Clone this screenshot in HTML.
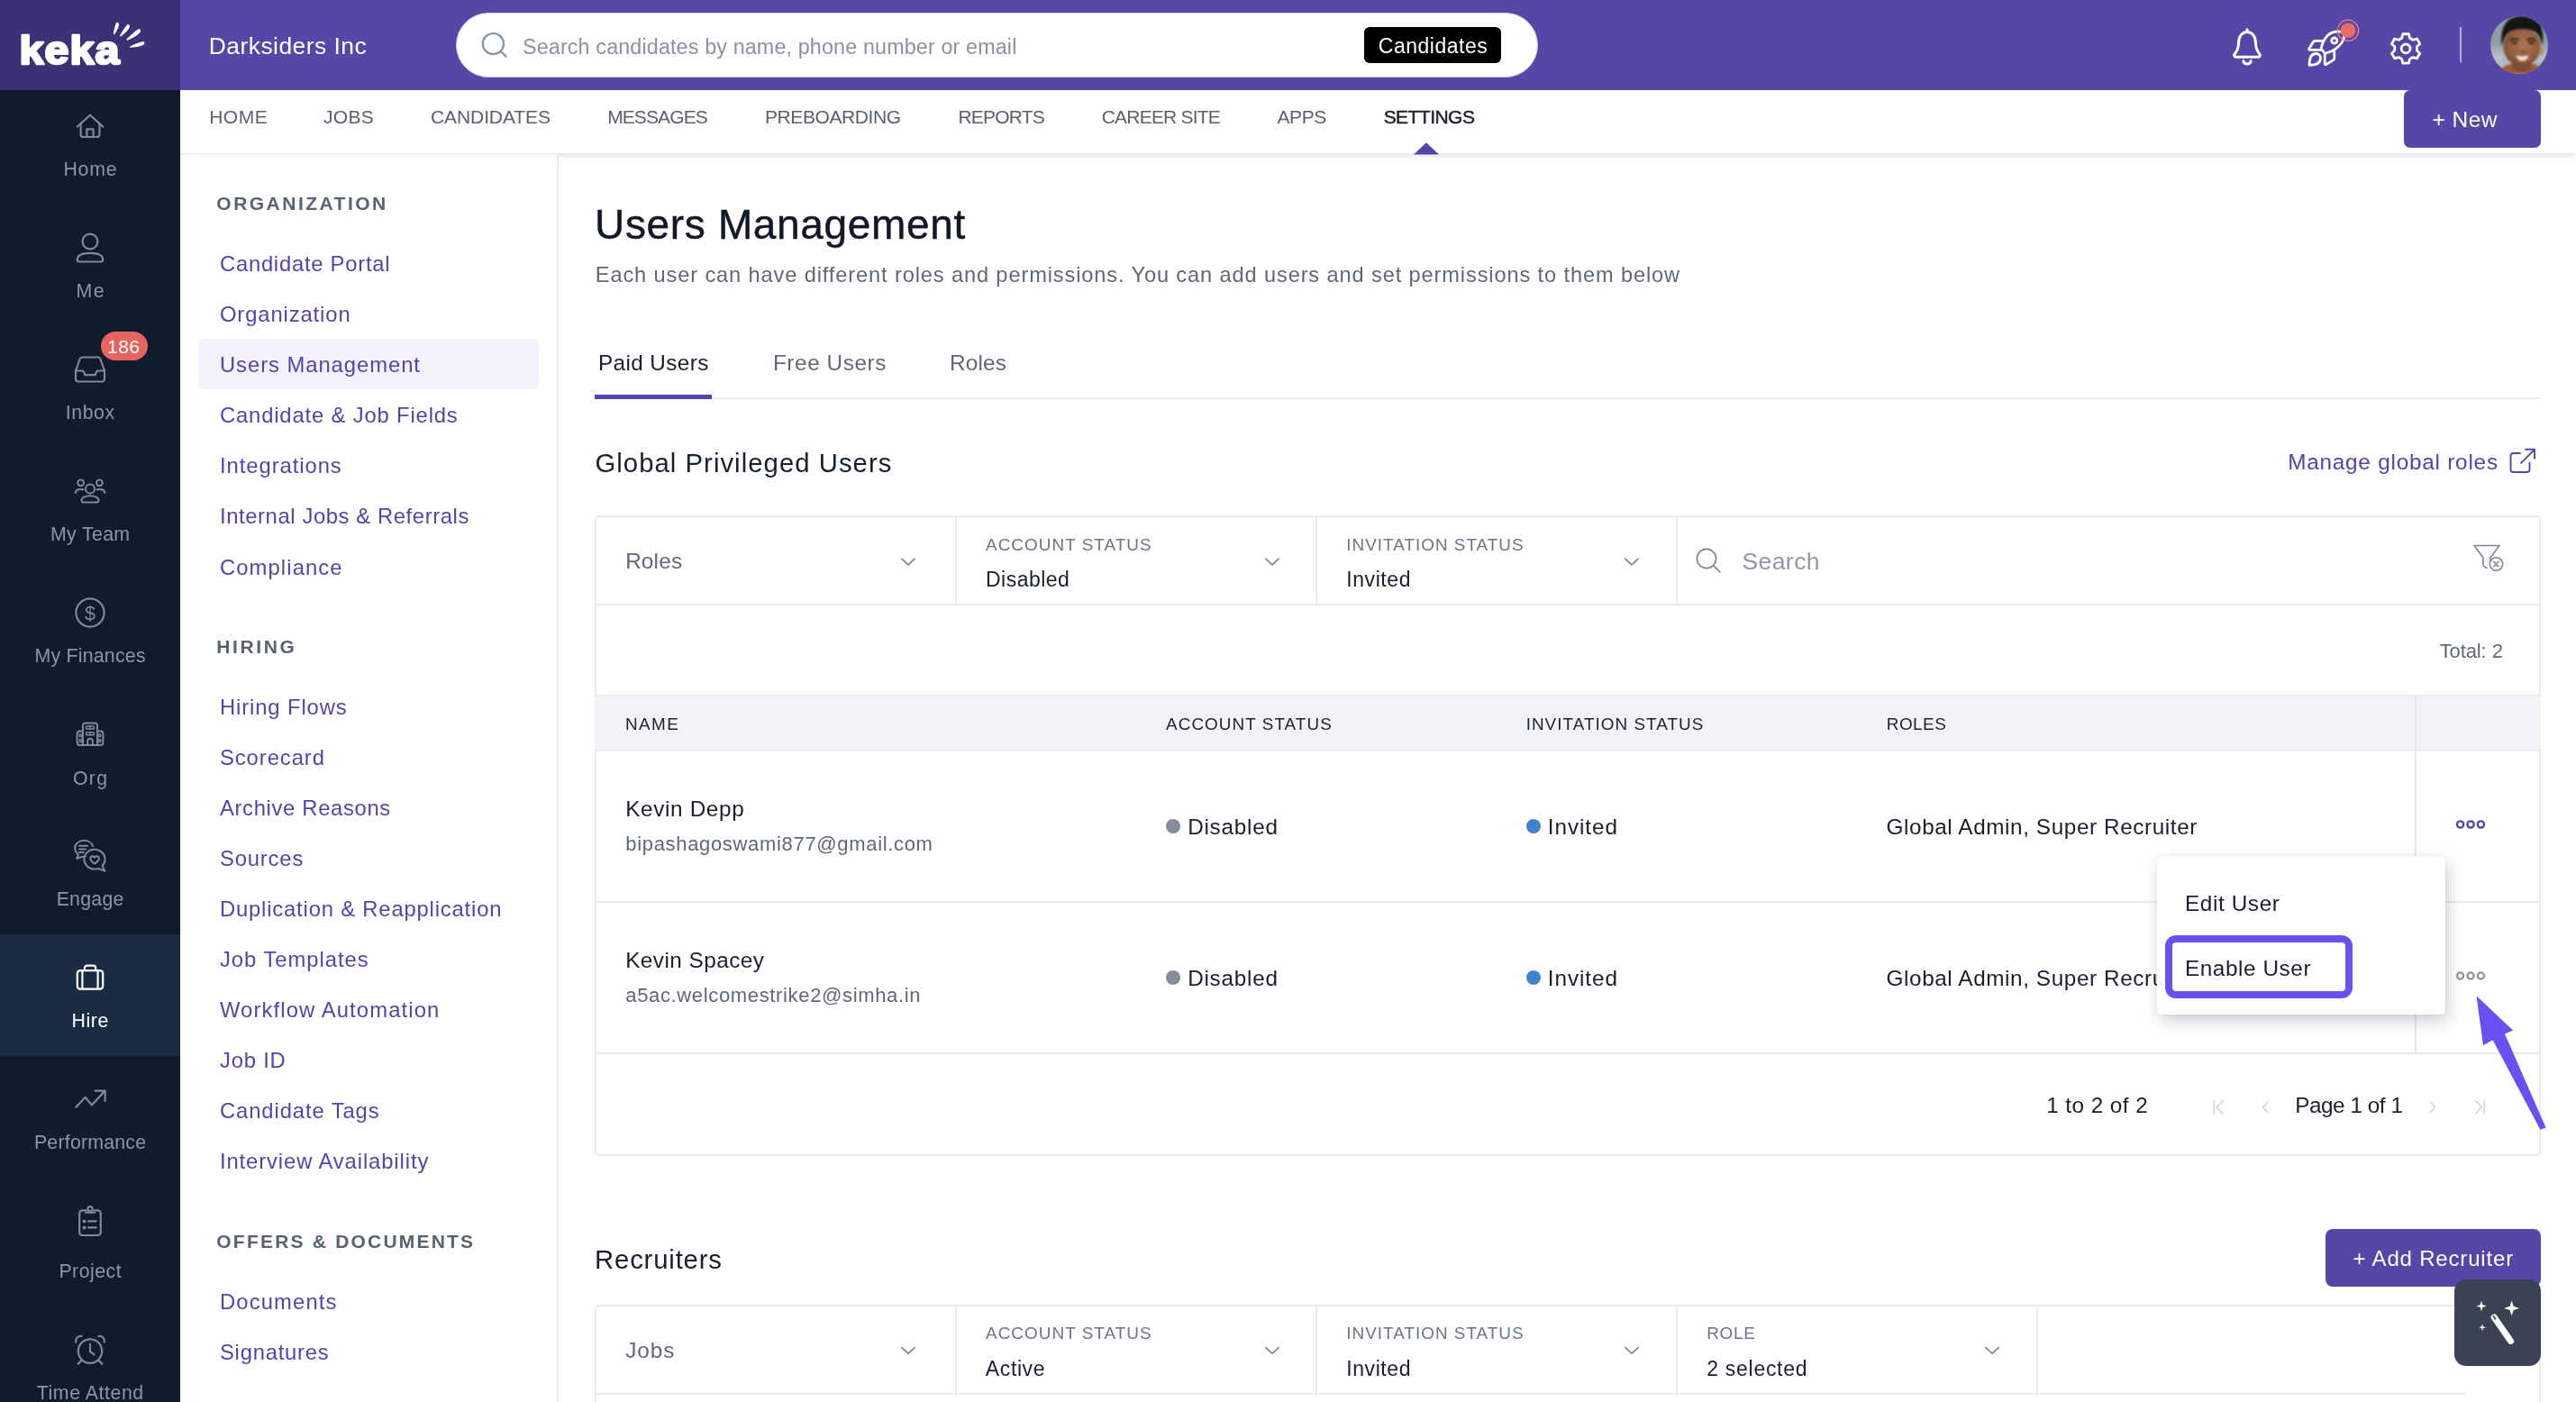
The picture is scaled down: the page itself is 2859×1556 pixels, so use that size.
<!DOCTYPE html>
<html lang="en"><head><meta charset="utf-8"><title>Users Management - Keka Hire</title>
<style>
html,body{margin:0;padding:0;background:#fff;}
body{width:2859px;height:1556px;overflow:hidden;font-family:"Liberation Sans",sans-serif;}
#root{will-change:transform;position:relative;width:2859px;height:1556px;overflow:hidden;background:#fff;}
.t{position:absolute;white-space:nowrap;font-kerning:normal;}
.b{position:absolute;box-sizing:border-box;}
svg{position:absolute;overflow:visible;}
.si{fill:none;stroke:#7f8997;stroke-width:2.2;stroke-linecap:round;stroke-linejoin:round;}
.hi{fill:none;stroke:#fff;stroke-width:3;stroke-linecap:round;stroke-linejoin:round;}
.chev{fill:none;stroke:#7a8595;stroke-width:1.7;stroke-linecap:round;stroke-linejoin:round;}
.pg{fill:none;stroke:#cbd0d8;stroke-width:1.400;stroke-linecap:round;stroke-linejoin:round;}
</style></head><body><div id="root">
<!-- ===== main content boxes ===== -->
<!-- tabs underline -->
<div class="b" style="left:660px;top:441px;width:2160px;height:2px;background:#ebedf0;"></div>
<div class="b" style="left:660px;top:438px;width:130px;height:4.5px;background:#5546a8;"></div>

<!-- card 1 -->
<div class="b" style="left:660px;top:772px;width:2160px;height:511px;border:2px solid #e9ebee;border-radius:0 0 5px 5px;background:#fff;"></div>
<div class="b" style="left:660px;top:572px;width:2160px;height:201px;border:2px solid #e9ebee;border-radius:5px;background:#fff;"></div>
<!-- filter row lines -->
<div class="b" style="left:661px;top:670px;width:2158px;height:2px;background:#e9ebee;"></div>
<div class="b" style="left:1060px;top:573px;width:2px;height:98px;background:#e9ebee;"></div>
<div class="b" style="left:1460px;top:573px;width:2px;height:98px;background:#e9ebee;"></div>
<div class="b" style="left:1860px;top:573px;width:2px;height:98px;background:#e9ebee;"></div>
<!-- table header -->
<div class="b" style="left:660px;top:771px;width:2160px;height:63px;background:#f2f3f6;border-top:2px solid #e9ebee;border-bottom:2px solid #eaecef;"></div>
<!-- action col separator -->
<div class="b" style="left:2680px;top:773px;width:2px;height:396px;background:#e6e8eb;"></div>
<!-- row separators -->
<div class="b" style="left:661px;top:1000px;width:2158px;height:2px;background:#e9ebee;"></div>
<div class="b" style="left:661px;top:1168px;width:2158px;height:2px;background:#e9ebee;"></div>

<!-- status dots -->
<div class="b" style="left:1294px;top:909px;width:16px;height:16px;border-radius:50%;background:#858d9c;"></div>
<div class="b" style="left:1694px;top:909px;width:16px;height:16px;border-radius:50%;background:#3f83cf;"></div>
<div class="b" style="left:1294px;top:1077px;width:16px;height:16px;border-radius:50%;background:#858d9c;"></div>
<div class="b" style="left:1694px;top:1077px;width:16px;height:16px;border-radius:50%;background:#3f83cf;"></div>

<!-- three dots -->
<svg style="left:0;top:0" width="2859" height="1556">
<g fill="none" stroke="#5546a8" stroke-width="2.4"><circle cx="2730.6" cy="915" r="3.6"/><circle cx="2742" cy="915" r="3.6"/><circle cx="2753.4" cy="915" r="3.6"/></g>
<g fill="none" stroke="#8a93a3" stroke-width="2.3"><circle cx="2730.6" cy="1083" r="3.6"/><circle cx="2742" cy="1083" r="3.6"/><circle cx="2753.4" cy="1083" r="3.6"/></g>
<!-- chevrons filter1 -->
<path class="chev" d="M1000.8 620.2l7.2 6.6 7.2-6.6"/>
<path class="chev" d="M1404.8 620.2l7.2 6.6 7.2-6.6"/>
<path class="chev" d="M1803.8 620.2l7.2 6.6 7.2-6.6"/>
<!-- search icon filter1 -->
<g fill="none" stroke="#7a8595" stroke-width="1.700" stroke-linecap="round"><circle cx="1894" cy="620" r="10.6"/><path d="M1901.8 627.8L1909 635"/></g>
<!-- filter clear icon -->
<g fill="none" stroke="#7a8595" stroke-width="1.600" stroke-linecap="round" stroke-linejoin="round"><path d="M2764 626.5v-7.5l10-13.5h-28l10 13.5v7.5c0 1.2 0.6 2 1.6 2.6l2.4 1.4"/><circle cx="2770.5" cy="626" r="7.2" fill="#fff"/><path d="M2767.8 623.3l5.4 5.4M2773.2 623.3l-5.4 5.4" stroke-width="1.500"/></g>
<!-- external link -->
<g fill="none" stroke="#5546a8" stroke-width="1.900" stroke-linecap="round" stroke-linejoin="round"><path d="M2797 503h-7.5a3 3 0 0 0-3 3v15a3 3 0 0 0 3 3h15a3 3 0 0 0 3-3v-7.5"/><path d="M2803 498.8h10v10M2812.5 499.3l-14.5 14.5"/></g>
<!-- pagination icons -->
<path class="pg" d="M2457.2 1221.5v14.5M2467 1221.5l-7 7.2 7 7.3"/>
<path class="pg" d="M2517 1223l-5.6 5.8 5.6 5.8"/>
<path class="pg" d="M2697.3 1223l5.6 5.8-5.6 5.8"/>
<path class="pg" d="M2757.2 1221.5v14.5M2747.4 1221.5l7 7.2-7 7.3"/>
</svg>

<!-- add recruiter button -->
<div class="b" style="left:2581px;top:1364px;width:239px;height:64px;background:#5546a8;border-radius:8px;"></div>

<!-- card 2 -->
<div class="b" style="left:660px;top:1448px;width:2160px;height:200px;border:2px solid #e9ebee;border-radius:5px;background:#fff;"></div>
<div class="b" style="left:661px;top:1546px;width:2076px;height:2px;background:#e9ebee;"></div>
<div class="b" style="left:1060px;top:1449px;width:2px;height:98px;background:#e9ebee;"></div>
<div class="b" style="left:1460px;top:1449px;width:2px;height:98px;background:#e9ebee;"></div>
<div class="b" style="left:1860px;top:1449px;width:2px;height:98px;background:#e9ebee;"></div>
<div class="b" style="left:2260px;top:1449px;width:2px;height:98px;background:#e9ebee;"></div>

<svg style="left:0;top:0" width="2859" height="1556">
<!-- chevrons filter2 -->
<path class="chev" d="M1000.8 1495.6l7.2 6.6 7.2-6.6"/>
<path class="chev" d="M1404.8 1495.6l7.2 6.6 7.2-6.6"/>
<path class="chev" d="M1803.8 1495.6l7.2 6.6 7.2-6.6"/>
<path class="chev" d="M2203.8 1495.6l7.2 6.6 7.2-6.6"/>
</svg>

<!-- ===== nav bar ===== -->
<div class="b" style="left:200px;top:100px;width:2659px;height:70px;background:#fff;box-shadow:0 2px 8px rgba(30,40,60,0.16);"></div>
<!-- settings triangle -->
<svg style="left:0;top:0" width="2859" height="180"><path d="M1569 171.500L1583 158.200l14 13.300z" fill="#5546a8"/></svg>
<!-- new button -->
<div class="b" style="left:2668px;top:100px;width:152px;height:64px;background:#5546a8;border-radius:0 0 8px 8px;border-radius:7px;"></div>

<!-- ===== settings side panel ===== -->
<div class="b" style="left:200px;top:170px;width:420px;height:1386px;background:#fff;border-right:2px solid #e9ebee;"></div>
<div class="b" style="left:200px;top:170px;width:418px;height:2px;background:#eceef1;"></div>
<div class="b" style="left:220px;top:376px;width:378px;height:56px;background:#f3f1fc;border-radius:6px;"></div>

<!-- ===== header ===== -->
<div class="b" style="left:200px;top:0;width:2659px;height:100px;background:#5546a8;"></div>
<div class="b" style="left:506px;top:14px;width:1201px;height:72px;background:#fff;border-radius:36px;border:1.500px solid #d3cfe8;"></div>
<div class="b" style="left:1514px;top:30px;width:152px;height:40px;background:#000;border-radius:6px;"></div>
<svg style="left:0;top:0" width="2859" height="100">
<g fill="none" stroke="#8492a6" stroke-width="2.2" stroke-linecap="round"><circle cx="547.4" cy="48.6" r="11.6"/><path d="M555.8 57l5.8 5.8"/></g>
<!-- bell -->
<g class="hi"><path d="M2494 32.8v2.6"/><path d="M2481.6 63.2c-1.8 0-2.6-1.9-1.5-3.2 2.6-3 4.4-6.200 4.400-12.200 0-7.200 4-12.400 9.500-12.400s9.500 5.200 9.500 12.400c0 6 1.800 9.200 4.400 12.200 1.100 1.300 0.300 3.200-1.500 3.200z"/><path d="M2489.800 67.600a4.300 4.300 0 0 0 8.400 0"/></g>
<!-- rocket -->
<g class="hi" style="stroke-width:2.8">
<path d="M2600.6 36.1C2597 34 2588.500 34.300 2583.500 39.200C2579.300 43.400 2577 49 2576 54.300L2580.400 59.100C2586 58.100 2591.500 55.300 2595.500 51.500C2600.200 47 2603 41 2600.600 36.100Z"/>
<circle cx="2590.800" cy="45.100" r="3.100"/>
<path d="M2577.600 45.300H2569.400c-0.900 0-1.600 0.400-2 1.200L2562.800 54c-0.400 0.700 0.100 1.400 0.900 1.400H2575.400"/>
<path d="M2590.800 57.300V64.600c0 0.900-0.400 1.600-1.200 2L2581.600 71.600c-0.700 0.400-1.400-0.100-1.400-0.900V59.600"/>
<path d="M2563 72.300c0-6.500 1.500-12.800 7.500-12.800c3 0 5 2.200 5 5c0 6-6 7.800-12.500 7.800z"/>
</g>
<circle cx="2606" cy="33.800" r="8.400" fill="#ea6b63"/><circle cx="2606" cy="33.800" r="11.600" fill="none" stroke="#ee8a83" stroke-width="1.300"/>
<!-- gear -->
<g class="hi" style="stroke-width:2.800"><path d="M2665.70 42.20 L2666.82 37.73 L2673.38 37.73 L2674.50 42.20 L2678.03 44.24 L2682.47 42.98 L2685.74 48.65 L2682.43 51.86 L2682.43 55.94 L2685.74 59.15 L2682.47 64.82 L2678.03 63.56 L2674.50 65.60 L2673.38 70.07 L2666.82 70.07 L2665.70 65.60 L2662.17 63.56 L2657.73 64.82 L2654.46 59.15 L2657.77 55.94 L2657.77 51.86 L2654.46 48.65 L2657.73 42.98 L2662.17 44.24Z"/><circle cx="2670.1" cy="53.9" r="4.900"/></g>
<!-- divider -->
<path d="M2731 30v39.500" stroke="rgba(255,255,255,0.55)" stroke-width="2"/>
</svg>
<!-- avatar -->
<svg style="left:2764px;top:18px" width="64" height="64" viewBox="0 0 64 64">
<defs><clipPath id="avc"><circle cx="32" cy="32" r="32"/></clipPath>
<filter id="avb" x="-20%" y="-20%" width="140%" height="140%"><feGaussianBlur stdDeviation="1.300"/></filter>
<filter id="avb2" x="-20%" y="-20%" width="140%" height="140%"><feGaussianBlur stdDeviation="0.800"/></filter>
<linearGradient id="avbg" x1="0" y1="0" x2="0" y2="1"><stop offset="0" stop-color="#93a2ab"/><stop offset="0.450" stop-color="#8d9aa1"/><stop offset="0.700" stop-color="#b4bec5"/><stop offset="1" stop-color="#aab3b9"/></linearGradient>
<radialGradient id="face" cx="55%" cy="45%" r="60%"><stop offset="0" stop-color="#ad7653"/><stop offset="0.650" stop-color="#96603f"/><stop offset="1" stop-color="#6e4530"/></radialGradient></defs>
<g clip-path="url(#avc)">
<rect width="64" height="64" fill="url(#avbg)"/>
<g filter="url(#avb)">
<path d="M10 64c1-6 6-9.500 12-11l13 3 13-3c4 1 8 3 10 7v4z" fill="#9b5c33"/>
<path d="M24 44h22v14c-4 5-18 5-22 0z" fill="#7d4e37"/>
<ellipse cx="35" cy="34" rx="20.500" ry="21.500" fill="url(#face)"/>
<path d="M12.500 33C11 20 14 6 24 2C32-1 44-1 50 3C58 8 59.500 22 57.500 32C56 24 53 19 48 16.500C42 14 30 13.500 22 17C17 20 14.500 26 12.500 33Z" fill="#141518"/>
<ellipse cx="56.500" cy="39" rx="2" ry="4" fill="#b98a6c"/>
</g>
<g filter="url(#avb2)">
<path d="M22 26.500c2-1.600 6-1.800 8.500-0.500M41 26c2.500-1.300 6.500-1.100 8.500 0.500" stroke="#3a241b" stroke-width="2.200" fill="none" stroke-linecap="round"/>
<path d="M24 29.500h5M43 29.500h5" stroke="#2a1a14" stroke-width="1.800" stroke-linecap="round"/>
<path d="M28.500 43c4 1.500 10 1.500 14 0-1 5-4 6.500-7 6.500s-6-1.500-7-6.500z" fill="#f1e3da"/>
<path d="M28 42.500c4.500 1.600 10.500 1.600 15 0" stroke="#6b3e2c" stroke-width="1.200" fill="none"/>
<path d="M33 38.500c1.500 0.800 4 0.800 5.500 0" stroke="#6b3e2c" stroke-width="1.300" fill="none"/>
</g>
</g></svg>

<!-- ===== sidebar ===== -->
<div class="b" style="left:0;top:0;width:200px;height:1556px;background:#0f1c2b;"></div>
<div class="b" style="left:0;top:0;width:200px;height:100px;background:#3c3177;"></div>
<div class="b" style="left:0;top:1037px;width:200px;height:135px;background:#192c44;"></div>
<!-- inbox badge -->
<div class="b" style="left:112px;top:368px;width:52px;height:32px;border-radius:16px;background:#e5645f;"></div>
<!-- logo -->
<svg style="left:0;top:0" width="200" height="100">
<text transform="translate(21.600,71.200) scale(1.076,1)" font-family="'Liberation Sans',sans-serif" font-weight="700" font-size="45" fill="#fff" stroke="#fff" stroke-width="2.600" stroke-linejoin="round" letter-spacing="1">keka</text>
<g fill="#fff">
<path d="M130.300 24.800c1.600 0.200 2 1.800 1.500 3.600-0.800 3.200-2.600 7-4.900 9.600-0.500 0.500-1.100 0.100-1-0.600 0.500-3.600 1.400-7.600 2.600-10.800 0.400-1.100 0.900-1.900 1.800-1.800z"/>
<path d="M142.800 27.200c1.500 0.800 1.500 2.400 0.600 3.900-2 3.200-5.500 6.800-9.400 9.400-0.600 0.400-1.300-0.200-0.900-0.900 1.900-3.700 4.400-7.800 7-10.900 0.800-1 1.700-2 2.700-1.500z"/>
<path d="M155.400 32.600c1.200 1.300 0.700 2.900-0.600 4.200-3.300 3.100-8.300 6.200-13.500 8-0.800 0.300-1.400-0.600-0.800-1.200 3.300-3.700 7.400-7.500 11.400-10.200 1.200-0.800 2.500-1.700 3.500-0.800z"/>
<path d="M160.300 47.100c0.500 1.500-0.500 2.600-2 3.200-3.700 1.500-8.700 2.500-13.600 2.500-0.800 0-1-1-0.300-1.300 4-2.100 8.500-3.900 12.400-5 1.300-0.400 3-0.700 3.500 0.600z"/>
</g></svg>
<!-- sidebar icons -->
<svg style="left:0;top:0" width="200" height="1556">
<!-- home -->
<g class="si"><path d="M85.800 140.600L100 127.800l14.200 12.800"/><path d="M89.600 137.600v11.600a2.800 2.800 0 0 0 2.800 2.800h15.200a2.800 2.800 0 0 0 2.800-2.800v-11.600"/><path d="M96.400 152v-8.600h7.200v8.600"/></g>
<!-- me -->
<g class="si"><circle cx="100" cy="268" r="8.400"/><path d="M85.800 288.300c0-4.700 5.400-7.500 14.200-7.500s14.200 2.800 14.200 7.500a2.200 2.200 0 0 1-2.200 2.200h-24a2.200 2.200 0 0 1-2.200-2.200z"/></g>
<!-- inbox -->
<g class="si"><path d="M84 411.500l4.600-13a3 3 0 0 1 2.800-2h17.200a3 3 0 0 1 2.800 2l4.600 13v9a3 3 0 0 1-3 3h-26a3 3 0 0 1-3-3z"/><path d="M84 411.500h8.200l2.200 4.600h11.200l2.200-4.600h8.200"/></g>
<!-- my team -->
<g class="si" style="stroke-width:2"><circle cx="100" cy="542.600" r="5"/><path d="M90.600 555.600c0-3.200 4-5.400 9.400-5.400s9.400 2.200 9.400 5.400a1.800 1.800 0 0 1-1.800 1.800h-15.200a1.800 1.800 0 0 1-1.800-1.800z"/><circle cx="89.600" cy="535.800" r="3.400"/><circle cx="110.400" cy="535.800" r="3.400"/><path d="M83.800 547c0-2.400 2.400-4 5.800-4 1.200 0 2.200 0.200 3 0.500"/><path d="M116.200 547c0-2.400-2.400-4-5.800-4-1.200 0-2.200 0.200-3 0.500"/></g>
<!-- finances -->
<g class="si"><circle cx="100" cy="680" r="15.600"/></g>
<text x="100" y="687.600" text-anchor="middle" font-family="'Liberation Sans',sans-serif" font-size="21.500" fill="#7f8997">$</text>
<!-- org -->
<g class="si" style="stroke-width:2"><path d="M92 827v-21.600a3 3 0 0 1 3-3h10a3 3 0 0 1 3 3V827"/><path d="M92 811.600h-3.600a2.800 2.800 0 0 0-2.800 2.800v9.800a2.800 2.800 0 0 0 2.800 2.800h23.200a2.800 2.800 0 0 0 2.800-2.800v-9.800a2.800 2.800 0 0 0-2.800-2.800H108"/><path d="M97.200 827v-4.400a2.800 2.800 0 0 1 5.600 0v4.400"/><g style="stroke-width:1.500"><rect x="95.600" y="806" width="8.800" height="3" rx="0.800"/><path d="M100 806v3"/><rect x="95.600" y="812.800" width="8.800" height="3" rx="0.800"/><path d="M100 812.800v3"/><rect x="88.200" y="815" width="2.600" height="2.600" rx="0.500"/><rect x="88.200" y="820.800" width="2.600" height="2.600" rx="0.500"/><rect x="109.200" y="815" width="2.600" height="2.600" rx="0.500"/><rect x="109.200" y="820.800" width="2.600" height="2.600" rx="0.500"/></g></g>
<!-- engage -->
<g class="si" style="stroke-width:2"><path d="M94.800 950.600c-1.200 0.300-2.400 0.400-3.600 0.200l-6 2.200 1.600-4.800c-2.400-2-3.600-4.600-3.600-7.200 0-4.600 4.400-8.200 10-8.200 4.800 0 8.800 2.600 9.800 6.200"/><path d="M88 938.800h9M88 942.400h7M88 946h4.600"/><path d="M105 942.800c6.400 0 11.600 4.800 11.600 10.800 0 2.800-1.200 5.400-3 7.200l2.800 6-7-2.800c-1.400 0.400-2.800 0.600-4.400 0.600-6.400 0-11.600-4.800-11.600-11s5.200-10.800 11.600-10.800z"/><path d="M105 958.600c-2.800-1.800-4.800-3.600-4.800-5.800a2.500 2.500 0 0 1 4.800-1 2.500 2.500 0 0 1 4.800 1c0 2.200-2 4-4.800 5.800z"/></g>
<!-- hire -->
<g class="si" style="stroke:#fff"><rect x="85.800" y="1077.200" width="28.400" height="20.400" rx="3.200"/><path d="M93.800 1077v-2.600a2.800 2.800 0 0 1 2.800-2.800h6.800a2.800 2.800 0 0 1 2.800 2.800v2.600"/><path d="M91.400 1077.400v20M108.600 1077.400v20"/></g>
<!-- performance -->
<g class="si"><path d="M84.400 1228.800l10.200-11 7.200 8.600 14.400-15.400"/><path d="M105.600 1210.600h11v11.400"/></g>
<!-- project -->
<g class="si"><path d="M95.400 1343.400h-4a3.200 3.200 0 0 0-3.200 3.200v21.200a3.200 3.200 0 0 0 3.200 3.200h17.200a3.200 3.200 0 0 0 3.200-3.200v-21.200a3.200 3.200 0 0 0-3.200-3.200h-4"/><path d="M95 1345.600h10"/><circle cx="100" cy="1341.800" r="2.600"/><path d="M98.200 1355.400h8.600M98.200 1362.400h8.600"/><circle cx="93.600" cy="1355.400" r="0.900" fill="#7f8997"/><circle cx="93.600" cy="1362.400" r="0.900" fill="#7f8997"/></g>
<!-- time attend -->
<g class="si"><circle cx="100" cy="1499.600" r="13.200"/><path d="M100 1491.600v8.400l4.600 3.400"/><path d="M84.200 1489.400c-0.800-3.800 2.400-7.200 6.400-6.400"/><path d="M115.800 1489.400c0.800-3.800-2.400-7.200-6.400-6.400"/><path d="M90.800 1509.600l-4.200 4.200M109.200 1509.600l4.200 4.200"/></g>
</svg>

<!-- texts -->
<span class="t" id="t0" style="top:32.5px;font-size:26.4px;line-height:37px;color:#ffffff;letter-spacing:0.476px;left:231.82px;">Darksiders Inc</span>
<span class="t" id="t1" style="top:35.5px;font-size:23.3px;line-height:33px;color:#8892a3;letter-spacing:0.149px;left:580.00px;">Search candidates by name, phone number or email</span>
<span class="t" id="t2" style="top:35.0px;font-size:23px;line-height:32px;color:#ffffff;letter-spacing:0.505px;left:1529.82px;">Candidates</span>
<span class="t" id="t3" style="top:115.0px;font-size:21px;line-height:29px;color:#56626f;letter-spacing:0.533px;left:232.14px;">HOME</span>
<span class="t" id="t4" style="top:115.0px;font-size:21px;line-height:29px;color:#56626f;letter-spacing:0.280px;left:359.04px;">JOBS</span>
<span class="t" id="t5" style="top:115.0px;font-size:21px;line-height:29px;color:#56626f;letter-spacing:-0.100px;left:478.04px;">CANDIDATES</span>
<span class="t" id="t6" style="top:115.0px;font-size:21px;line-height:29px;color:#56626f;letter-spacing:-0.882px;left:674.14px;">MESSAGES</span>
<span class="t" id="t7" style="top:115.0px;font-size:21px;line-height:29px;color:#56626f;letter-spacing:-0.420px;left:849.04px;">PREBOARDING</span>
<span class="t" id="t8" style="top:115.0px;font-size:21px;line-height:29px;color:#56626f;letter-spacing:-0.807px;left:1063.44px;">REPORTS</span>
<span class="t" id="t9" style="top:115.0px;font-size:21px;line-height:29px;color:#56626f;letter-spacing:-0.793px;left:1222.74px;">CAREER SITE</span>
<span class="t" id="t10" style="top:115.0px;font-size:21px;line-height:29px;color:#56626f;letter-spacing:-0.444px;left:1417.54px;">APPS</span>
<span class="t" id="t11" style="top:115.0px;font-size:21px;line-height:29px;color:#1a2230;letter-spacing:-0.531px;-webkit-text-stroke:0.5px #1a2230;left:1535.64px;">SETTINGS</span>
<span class="t" id="t12" style="top:115.5px;font-size:24.5px;line-height:34px;color:#ffffff;letter-spacing:0.477px;left:2699.53px;">+ New</span>
<span class="t" id="t13" style="top:173.0px;font-size:21.3px;line-height:30px;color:#8d97a4;letter-spacing:0.773px;left:70.44px;">Home</span>
<span class="t" id="t14" style="top:308.0px;font-size:21.3px;line-height:30px;color:#8d97a4;letter-spacing:1.536px;left:84.44px;">Me</span>
<span class="t" id="t15" style="top:443.0px;font-size:21.3px;line-height:30px;color:#8d97a4;letter-spacing:0.580px;left:72.78px;">Inbox</span>
<span class="t" id="t16" style="top:578.0px;font-size:21.3px;line-height:30px;color:#8d97a4;letter-spacing:0.355px;left:55.94px;">My Team</span>
<span class="t" id="t17" style="top:713.0px;font-size:21.3px;line-height:30px;color:#8d97a4;letter-spacing:0.240px;left:38.44px;">My Finances</span>
<span class="t" id="t18" style="top:849.0px;font-size:21.3px;line-height:30px;color:#8d97a4;letter-spacing:1.307px;left:80.94px;">Org</span>
<span class="t" id="t19" style="top:983.0px;font-size:21.3px;line-height:30px;color:#8d97a4;letter-spacing:0.258px;left:62.64px;">Engage</span>
<span class="t" id="t20" style="top:1118.0px;font-size:21.3px;line-height:30px;color:#ffffff;letter-spacing:0.589px;left:79.58px;">Hire</span>
<span class="t" id="t21" style="top:1253.0px;font-size:21.3px;line-height:30px;color:#8d97a4;letter-spacing:0.221px;left:37.94px;">Performance</span>
<span class="t" id="t22" style="top:1396.0px;font-size:21.3px;line-height:30px;color:#8d97a4;letter-spacing:0.472px;left:65.44px;">Project</span>
<span class="t" id="t23" style="top:1531.0px;font-size:21.3px;line-height:30px;color:#8d97a4;letter-spacing:0.547px;left:40.84px;">Time Attend</span>
<span class="t" id="t24" style="top:370.0px;font-size:21px;line-height:29px;color:#ffffff;letter-spacing:0.427px;left:119.05px;">186</span>
<span class="t" id="t25" style="top:211.0px;font-size:21px;line-height:29px;color:#566372;font-weight:700;letter-spacing:2.481px;left:240.34px;">ORGANIZATION</span>
<span class="t" id="t26" style="top:703.0px;font-size:21px;line-height:29px;color:#566372;font-weight:700;letter-spacing:2.580px;left:240.34px;">HIRING</span>
<span class="t" id="t27" style="top:1363.0px;font-size:21px;line-height:29px;color:#566372;font-weight:700;letter-spacing:2.203px;left:240.34px;">OFFERS &amp; DOCUMENTS</span>
<span class="t" id="t28" style="top:276.0px;font-size:23.8px;line-height:33px;color:#5244a8;letter-spacing:0.753px;left:243.97px;">Candidate Portal</span>
<span class="t" id="t29" style="top:332.0px;font-size:23.8px;line-height:33px;color:#5244a8;letter-spacing:0.886px;left:243.97px;">Organization</span>
<span class="t" id="t30" style="top:388.0px;font-size:23.8px;line-height:33px;color:#5244a8;letter-spacing:0.955px;left:243.97px;">Users Management</span>
<span class="t" id="t31" style="top:444.0px;font-size:23.8px;line-height:33px;color:#5244a8;letter-spacing:0.844px;left:243.97px;">Candidate &amp; Job Fields</span>
<span class="t" id="t32" style="top:500.0px;font-size:23.8px;line-height:33px;color:#5244a8;letter-spacing:0.947px;left:243.97px;">Integrations</span>
<span class="t" id="t33" style="top:556.0px;font-size:23.8px;line-height:33px;color:#5244a8;letter-spacing:0.604px;left:243.97px;">Internal Jobs &amp; Referrals</span>
<span class="t" id="t34" style="top:613.0px;font-size:23.8px;line-height:33px;color:#5244a8;letter-spacing:1.103px;left:243.97px;">Compliance</span>
<span class="t" id="t35" style="top:768.0px;font-size:23.8px;line-height:33px;color:#5244a8;letter-spacing:0.889px;left:243.97px;">Hiring Flows</span>
<span class="t" id="t36" style="top:824.0px;font-size:23.8px;line-height:33px;color:#5244a8;letter-spacing:0.939px;left:243.97px;">Scorecard</span>
<span class="t" id="t37" style="top:880.0px;font-size:23.8px;line-height:33px;color:#5244a8;letter-spacing:0.671px;left:243.97px;">Archive Reasons</span>
<span class="t" id="t38" style="top:936.0px;font-size:23.8px;line-height:33px;color:#5244a8;letter-spacing:0.845px;left:243.97px;">Sources</span>
<span class="t" id="t39" style="top:992.0px;font-size:23.8px;line-height:33px;color:#5244a8;letter-spacing:0.825px;left:243.97px;">Duplication &amp; Reapplication</span>
<span class="t" id="t40" style="top:1048.0px;font-size:23.8px;line-height:33px;color:#5244a8;letter-spacing:0.980px;left:243.97px;">Job Templates</span>
<span class="t" id="t41" style="top:1104.0px;font-size:23.8px;line-height:33px;color:#5244a8;letter-spacing:1.121px;left:243.97px;">Workflow Automation</span>
<span class="t" id="t42" style="top:1160.0px;font-size:23.8px;line-height:33px;color:#5244a8;letter-spacing:0.800px;left:243.97px;">Job ID</span>
<span class="t" id="t43" style="top:1216.0px;font-size:23.8px;line-height:33px;color:#5244a8;letter-spacing:0.902px;left:243.97px;">Candidate Tags</span>
<span class="t" id="t44" style="top:1272.0px;font-size:23.8px;line-height:33px;color:#5244a8;letter-spacing:0.898px;left:243.97px;">Interview Availability</span>
<span class="t" id="t45" style="top:1428.0px;font-size:23.8px;line-height:33px;color:#5244a8;letter-spacing:1.140px;left:243.97px;">Documents</span>
<span class="t" id="t46" style="top:1484.0px;font-size:23.8px;line-height:33px;color:#5244a8;letter-spacing:0.767px;left:243.97px;">Signatures</span>
<span class="t" id="t47" style="top:217.0px;font-size:46px;line-height:64px;color:#111927;letter-spacing:0.660px;-webkit-text-stroke:0.45px #111927;left:660.04px;">Users Management</span>
<span class="t" id="t48" style="top:288.5px;font-size:23.6px;line-height:33px;color:#5d6978;letter-spacing:0.885px;left:660.78px;">Each user can have different roles and permissions. You can add users and set permissions to them below</span>
<span class="t" id="t49" style="top:385.5px;font-size:24.3px;line-height:34px;color:#16202e;letter-spacing:0.400px;left:663.94px;">Paid Users</span>
<span class="t" id="t50" style="top:385.5px;font-size:24.3px;line-height:34px;color:#5d6978;letter-spacing:0.586px;left:857.94px;">Free Users</span>
<span class="t" id="t51" style="top:385.5px;font-size:24.3px;line-height:34px;color:#5d6978;letter-spacing:0.201px;left:1053.94px;">Roles</span>
<span class="t" id="t52" style="top:493.0px;font-size:29.3px;line-height:41px;color:#16202e;letter-spacing:1.037px;left:660.44px;">Global Privileged Users</span>
<span class="t" id="t53" style="top:495.5px;font-size:24.3px;line-height:34px;color:#5244a8;letter-spacing:0.783px;left:2539.14px;">Manage global roles</span>
<span class="t" id="t54" style="top:605.5px;font-size:24.3px;line-height:34px;color:#5d6978;letter-spacing:0.201px;left:694.14px;">Roles</span>
<span class="t" id="t55" style="top:591.5px;font-size:18.9px;line-height:26px;color:#6a7686;letter-spacing:1.035px;left:1094.07px;">ACCOUNT STATUS</span>
<span class="t" id="t56" style="top:627.0px;font-size:23px;line-height:32px;color:#16202e;letter-spacing:0.486px;left:1094.02px;">Disabled</span>
<span class="t" id="t57" style="top:591.5px;font-size:18.9px;line-height:26px;color:#6a7686;letter-spacing:1.007px;left:1494.27px;">INVITATION STATUS</span>
<span class="t" id="t58" style="top:627.0px;font-size:23px;line-height:32px;color:#16202e;letter-spacing:0.589px;left:1494.22px;">Invited</span>
<span class="t" id="t59" style="top:604.5px;font-size:26.5px;line-height:37px;color:#8d98a8;letter-spacing:0.436px;left:1933.41px;">Search</span>
<span class="t" id="t60" style="top:707.0px;font-size:22px;line-height:31px;color:#5d6978;letter-spacing:-0.105px;left:2707.68px;">Total: 2</span>
<span class="t" id="t61" style="top:790.5px;font-size:18.9px;line-height:26px;color:#1a2230;letter-spacing:1.371px;left:694.07px;">NAME</span>
<span class="t" id="t62" style="top:790.5px;font-size:18.9px;line-height:26px;color:#1a2230;letter-spacing:1.051px;left:1294.07px;">ACCOUNT STATUS</span>
<span class="t" id="t63" style="top:790.5px;font-size:18.9px;line-height:26px;color:#1a2230;letter-spacing:1.032px;left:1693.67px;">INVITATION STATUS</span>
<span class="t" id="t64" style="top:790.5px;font-size:18.9px;line-height:26px;color:#1a2230;letter-spacing:0.461px;left:2093.87px;">ROLES</span>
<span class="t" id="t65" style="top:880.5px;font-size:24.3px;line-height:34px;color:#16202e;letter-spacing:0.667px;left:694.14px;">Kevin Depp</span>
<span class="t" id="t66" style="top:921.0px;font-size:22px;line-height:31px;color:#5d6978;letter-spacing:0.674px;left:694.28px;">bipashagoswami877@gmail.com</span>
<span class="t" id="t67" style="top:900.5px;font-size:24.3px;line-height:34px;color:#16202e;letter-spacing:0.755px;left:1318.14px;">Disabled</span>
<span class="t" id="t68" style="top:900.5px;font-size:24.3px;line-height:34px;color:#16202e;letter-spacing:0.939px;left:1717.74px;">Invited</span>
<span class="t" id="t69" style="top:1048.5px;font-size:24.3px;line-height:34px;color:#16202e;letter-spacing:0.477px;left:694.14px;">Kevin Spacey</span>
<span class="t" id="t70" style="top:1089.0px;font-size:22px;line-height:31px;color:#5d6978;letter-spacing:0.649px;left:694.28px;">a5ac.welcomestrike2@simha.in</span>
<span class="t" id="t71" style="top:1068.5px;font-size:24.3px;line-height:34px;color:#16202e;letter-spacing:0.755px;left:1318.14px;">Disabled</span>
<span class="t" id="t72" style="top:1068.5px;font-size:24.3px;line-height:34px;color:#16202e;letter-spacing:0.939px;left:1717.74px;">Invited</span>
<span class="t" id="t73" style="top:900.5px;font-size:24.3px;line-height:34px;color:#16202e;letter-spacing:0.595px;left:2093.54px;">Global Admin, Super Recruiter</span>
<span class="t" id="t74" style="top:1068.5px;font-size:24.3px;line-height:34px;color:#16202e;letter-spacing:0.595px;left:2093.54px;">Global Admin, Super Recruiter</span>
<span class="t" id="t75" style="top:1209.5px;font-size:24.3px;line-height:34px;color:#16202e;letter-spacing:0.455px;left:2271.14px;">1 to 2 of 2</span>
<span class="t" id="t76" style="top:1209.5px;font-size:24.3px;line-height:34px;color:#16202e;letter-spacing:-0.457px;left:2547.24px;">Page 1 of 1</span>
<span class="t" id="t77" style="top:1377.0px;font-size:29.3px;line-height:41px;color:#16202e;letter-spacing:0.826px;left:660.04px;">Recruiters</span>
<span class="t" id="t78" style="top:1379.5px;font-size:24px;line-height:34px;color:#ffffff;letter-spacing:0.822px;left:2611.56px;">+ Add Recruiter</span>
<span class="t" id="t79" style="top:1481.5px;font-size:24.3px;line-height:34px;color:#5d6978;letter-spacing:0.967px;left:694.14px;">Jobs</span>
<span class="t" id="t80" style="top:1466.5px;font-size:18.9px;line-height:26px;color:#6a7686;letter-spacing:1.035px;left:1094.07px;">ACCOUNT STATUS</span>
<span class="t" id="t81" style="top:1503.0px;font-size:23px;line-height:32px;color:#16202e;letter-spacing:0.612px;left:1093.82px;">Active</span>
<span class="t" id="t82" style="top:1466.5px;font-size:18.9px;line-height:26px;color:#6a7686;letter-spacing:1.007px;left:1494.27px;">INVITATION STATUS</span>
<span class="t" id="t83" style="top:1503.0px;font-size:23px;line-height:32px;color:#16202e;letter-spacing:0.589px;left:1494.22px;">Invited</span>
<span class="t" id="t84" style="top:1466.5px;font-size:18.9px;line-height:26px;color:#6a7686;letter-spacing:0.679px;left:1894.27px;">ROLE</span>
<span class="t" id="t85" style="top:1503.0px;font-size:23px;line-height:32px;color:#16202e;letter-spacing:0.716px;left:1894.22px;">2 selected</span>
<span class="t" id="t86" style="top:985.5px;font-size:24.3px;line-height:34px;color:#16202e;letter-spacing:0.626px;z-index:60;left:2424.94px;">Edit User</span>
<span class="t" id="t87" style="top:1057.5px;font-size:24.3px;line-height:34px;color:#16202e;letter-spacing:0.591px;z-index:60;left:2424.94px;">Enable User</span>
<!-- popup -->
<div class="b" style="left:2394px;top:950px;width:320px;height:176px;background:#fff;border-radius:5px;box-shadow:3px 7px 18px rgba(20,30,50,0.22),0 0 2px rgba(20,30,50,0.10);z-index:50;"></div>
<div class="b" style="left:2403px;top:1038px;width:208px;height:70px;border:8px solid #6a50f2;border-radius:12px;z-index:55;"></div>
<!-- arrow -->
<svg style="left:0;top:0;z-index:70" width="2859" height="1556"><path d="M2748.500 1105.300L2789 1143.600L2780 1147.600L2825.600 1251.400L2819.400 1253.800L2766.600 1154.200L2756 1160.200Z" fill="#6a50f2"/></svg>
<!-- wand button -->
<div class="b" style="left:2724px;top:1420px;width:96px;height:96px;background:#3b4253;border-radius:13px;z-index:65;"></div>
<svg style="left:2724px;top:1420px;z-index:66" width="96" height="95" viewBox="0 0 96 95">
<path d="M44.200 42L62.600 68.400" stroke="#fff" stroke-width="7" stroke-linecap="round"/>
<path d="M43.400 40.800l2 2.900" stroke="#3b4253" stroke-width="1.800" stroke-linecap="round"/>
<path d="M63.600 23.500l2.100 6.300 6.300 2.100-6.300 2.100-2.100 6.300-2.100-6.300-6.300-2.100 6.300-2.100z" fill="#fff"/>
<path d="M30 23.500l1.300 4.700 4.700 1.300-4.700 1.300-1.300 4.700-1.300-4.700-4.700-1.300 4.700-1.300z" fill="#fff"/>
<path d="M31 49l0.900 3.300 3.300 0.900-3.300 0.900-0.900 3.300-0.900-3.300-3.300-0.900 3.300-0.900z" fill="#fff"/>
</svg>

</div></body></html>
